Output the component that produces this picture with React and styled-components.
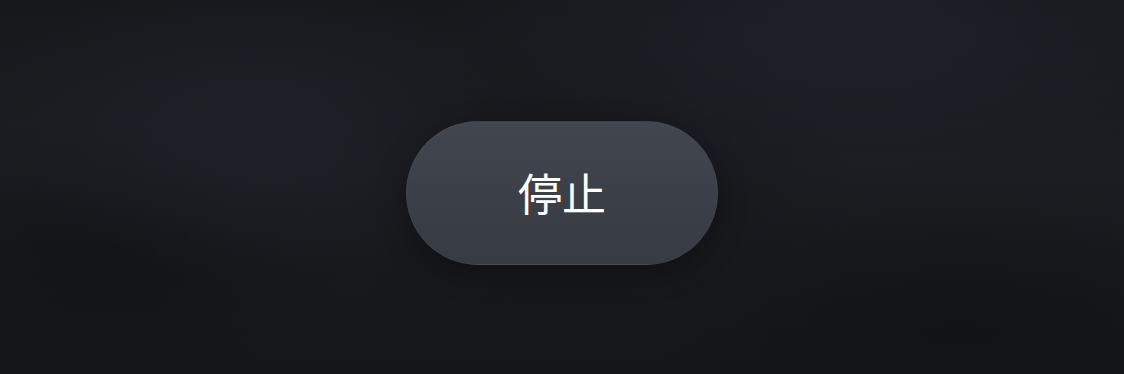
import React from 'react';
import styled, { createGlobalStyle } from 'styled-components';

const GlobalStyle = createGlobalStyle`
  html, body {
    margin: 0;
    padding: 0;
    background: #16171b;
  }
  #root {
    height: 100vh;
  }
`;

const Stage = styled.main`
  height: 100%;
  box-sizing: border-box;
  padding-top: 12px;
  display: flex;
  align-items: center;
  justify-content: center;
  background:
    radial-gradient(ellipse 380px 200px at 250px 130px, rgba(31, 33, 41, 0.9), transparent 75%),
    radial-gradient(ellipse 560px 220px at 860px 30px, rgba(31, 33, 42, 0.9), transparent 75%),
    radial-gradient(ellipse 340px 180px at 110px 250px, rgba(17, 18, 21, 0.8), transparent 75%),
    radial-gradient(ellipse 420px 190px at 960px 330px, rgba(17, 18, 21, 0.8), transparent 75%),
    radial-gradient(ellipse 420px 220px at 563px 193px, rgba(18, 19, 22, 0.7), transparent 70%),
    linear-gradient(180deg, #17181c 0%, #1b1d22 45%, #151619 100%);
`;

const StopButton = styled.button`
  width: 312px;
  height: 144px;
  border-radius: 72px;
  border: 1px solid rgba(255, 255, 255, 0.03);
  background: linear-gradient(180deg, #42464e 0%, #3b3f47 55%, #373b42 100%);
  box-shadow: 0 8px 30px rgba(0, 0, 0, 0.3);
  color: #ffffff;
  font-family: "Noto Sans CJK JP", "Noto Sans CJK SC", "Noto Sans", sans-serif;
  font-size: 44px;
  font-weight: 400;
  display: flex;
  align-items: center;
  justify-content: center;
  padding: 0 0 2px;
  cursor: pointer;
`;

export default function App() {
  return (
    <>
      <GlobalStyle />
      <Stage>
        <StopButton type="button">停止</StopButton>
      </Stage>
    </>
  );
}
